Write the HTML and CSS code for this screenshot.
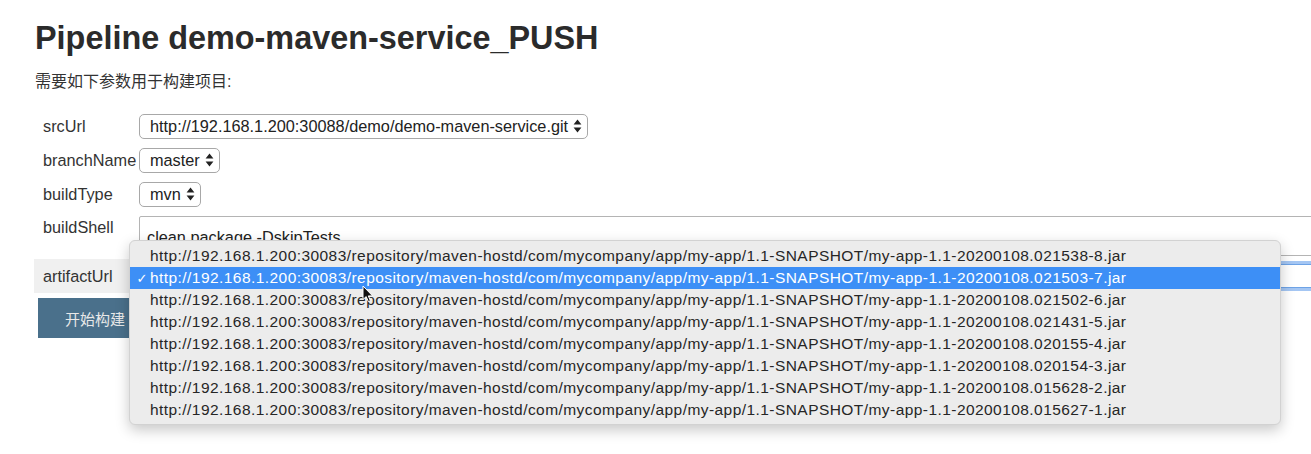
FILE: index.html
```html
<!DOCTYPE html>
<html lang="zh">
<head>
<meta charset="utf-8">
<title>Pipeline demo-maven-service_PUSH</title>
<link rel="stylesheet" href="styles.css">
</head>
<body>
<div class="page">
  <h1 class="title">Pipeline demo-maven-service_PUSH</h1>
  <p class="subtitle">需要如下参数用于构建项目:</p>
  <div class="form">
    <div class="row">
      <div class="label">srcUrl</div>
      <div class="control">
        <div class="select select-wide"><span class="value">http://192.168.1.200:30088/demo/demo-maven-service.git</span><svg class="arrows" width="9" height="14" viewBox="0 0 9 14"><path d="M4.5 0.5 L8.4 5.6 H0.6 Z M4.5 13.5 L8.4 8.4 H0.6 Z" fill="#222"/></svg></div>
      </div>
    </div>
    <div class="row">
      <div class="label">branchName</div>
      <div class="control">
        <div class="select"><span class="value">master</span><svg class="arrows" width="9" height="14" viewBox="0 0 9 14"><path d="M4.5 0.5 L8.4 5.6 H0.6 Z M4.5 13.5 L8.4 8.4 H0.6 Z" fill="#222"/></svg></div>
      </div>
    </div>
    <div class="row">
      <div class="label">buildType</div>
      <div class="control">
        <div class="select"><span class="value">mvn</span><svg class="arrows" width="9" height="14" viewBox="0 0 9 14"><path d="M4.5 0.5 L8.4 5.6 H0.6 Z M4.5 13.5 L8.4 8.4 H0.6 Z" fill="#222"/></svg></div>
      </div>
    </div>
    <div class="row row-top">
      <div class="label label-top">buildShell</div>
      <div class="control">
        <div class="textarea">clean package -DskipTests</div>
      </div>
    </div>
    <div class="row row-artifact">
      <div class="label label-gray">artifactUrl</div>
      <div class="control">
        <div class="select select-focus"><span class="value value-hidden">http://192.168.1.200:30083/repository/maven-hostd/com/mycompany/app/my-app/1.1-SNAPSHOT/my-app-1.1-20200108.021503-7.jar</span></div>
      </div>
    </div>
    <div class="actions">
      <button class="btn" type="button">开始构建</button>
    </div>
  </div>
</div>

<div class="popup">
  <div class="item"><span class="check"></span>http://192.168.1.200:30083/repository/maven-hostd/com/mycompany/app/my-app/1.1-SNAPSHOT/my-app-1.1-20200108.021538-8.jar</div>
  <div class="item selected"><span class="check">✓</span>http://192.168.1.200:30083/repository/maven-hostd/com/mycompany/app/my-app/1.1-SNAPSHOT/my-app-1.1-20200108.021503-7.jar</div>
  <div class="item"><span class="check"></span>http://192.168.1.200:30083/repository/maven-hostd/com/mycompany/app/my-app/1.1-SNAPSHOT/my-app-1.1-20200108.021502-6.jar</div>
  <div class="item"><span class="check"></span>http://192.168.1.200:30083/repository/maven-hostd/com/mycompany/app/my-app/1.1-SNAPSHOT/my-app-1.1-20200108.021431-5.jar</div>
  <div class="item"><span class="check"></span>http://192.168.1.200:30083/repository/maven-hostd/com/mycompany/app/my-app/1.1-SNAPSHOT/my-app-1.1-20200108.020155-4.jar</div>
  <div class="item"><span class="check"></span>http://192.168.1.200:30083/repository/maven-hostd/com/mycompany/app/my-app/1.1-SNAPSHOT/my-app-1.1-20200108.020154-3.jar</div>
  <div class="item"><span class="check"></span>http://192.168.1.200:30083/repository/maven-hostd/com/mycompany/app/my-app/1.1-SNAPSHOT/my-app-1.1-20200108.015628-2.jar</div>
  <div class="item"><span class="check"></span>http://192.168.1.200:30083/repository/maven-hostd/com/mycompany/app/my-app/1.1-SNAPSHOT/my-app-1.1-20200108.015627-1.jar</div>
</div>

<svg class="cursor" width="12" height="18" viewBox="0 0 12 18"><path d="M1 1 L1 14.5 L4.2 11.6 L6.4 16.6 L8.4 15.7 L6.3 10.9 L10.6 10.9 Z" fill="#111" stroke="#fff" stroke-width="1"/></svg>
</body>
</html>
```

FILE: styles.css
```css
html, body {
  margin: 0;
  padding: 0;
  background: #ffffff;
  overflow: hidden;
}

body {
  width: 1311px;
  height: 454px;
  position: relative;
  font-family: "Liberation Sans", Arial, "Noto Sans CJK SC", sans-serif;
  color: #333333;
}

.page {
  padding-left: 35px;
}

.title {
  margin: 18px 0 0;
  font-size: 32.4px;
  line-height: 40px;
  font-weight: bold;
  color: #2b2b2b;
}

.subtitle {
  margin: 14px 0 0;
  font-size: 16px;
  line-height: 20px;
  color: #333;
  font-family: "Liberation Sans", "Noto Sans CJK SC", sans-serif;
}

.form {
  margin-top: 17px;
  margin-left: -1px;
}

.row {
  display: grid;
  grid-template-columns: 103px 1fr;
  align-items: center;
  height: 34px;
}

.row-top {
  align-items: start;
  height: 48px;
}

.label {
  padding-left: 9px;
  font-size: 16.3px;
  line-height: 18px;
  color: #333;
  white-space: nowrap;
}

.label-top {
  padding-top: 7px;
}

.label-gray {
  background: #f0f0f0;
  height: 34px;
  display: flex;
  align-items: center;
}

.control {
  padding-left: 2px;
  min-width: 0;
}

.select {
  display: inline-flex;
  align-items: center;
  height: 25px;
  box-sizing: border-box;
  border: 1px solid #a8a8a8;
  border-radius: 5px;
  background: #fff;
  padding: 0 5px 0 10px;
  font-size: 16.3px;
  color: #222;
  white-space: nowrap;
  gap: 5px;
}

.select-wide {
  width: 449px;
}

.select-focus {
  width: 1300px;
  height: 24px;
  border-color: #6ea3e6;
  box-shadow: 0 0 0 3px #a4c6f3;
  overflow: hidden;
}

.value-hidden {
  visibility: hidden;
}

.arrows {
  flex: none;
}

.textarea {
  margin-top: 5px;
  height: 40px;
  width: 1300px;
  box-sizing: border-box;
  border: 1px solid #b4b4b4;
  border-radius: 2px;
  padding: 11px 7px 0;
  font-size: 16.3px;
  line-height: 18px;
  color: #222;
  background: #fff;
}

.actions {
  padding-left: 4px;
  padding-top: 5px;
}

.btn {
  height: 40px;
  padding: 0 27px;
  border: none;
  background: #4a708b;
  color: #e8e8e8;
  font-size: 15px;
  font-family: "Noto Sans CJK SC", sans-serif;
}

.popup {
  position: absolute;
  left: 129px;
  top: 240px;
  width: 1152px;
  height: 185px;
  box-sizing: border-box;
  padding: 4px 0 5px;
  background: #ececec;
  border: 1px solid #d2d2d2;
  border-radius: 6px;
  box-shadow: 0 5px 14px rgba(0, 0, 0, 0.22);
  font-family: "Liberation Sans", Arial, sans-serif;
  font-size: 15.5px;
  letter-spacing: 0.44px;
  color: #262626;
}

.item {
  display: flex;
  align-items: center;
  height: 22px;
  white-space: nowrap;
  padding-left: 4px;
}

.check {
  display: inline-block;
  width: 16px;
  font-size: 13px;
  letter-spacing: 0;
  text-align: center;
  font-family: "DejaVu Sans", sans-serif;
}

.selected {
  background: #3d8ff6;
  color: #fff;
}

.cursor {
  position: absolute;
  left: 362px;
  top: 285px;
}
```
